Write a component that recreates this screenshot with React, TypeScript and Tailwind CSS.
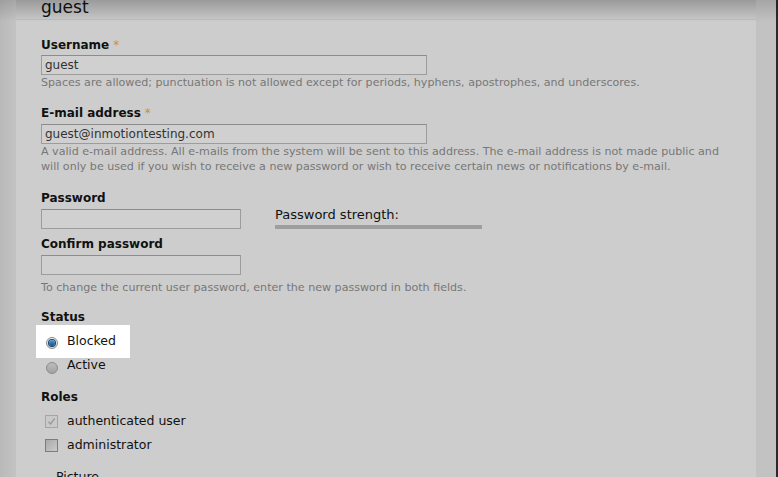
const font = { fontFamily: '"DejaVu Sans", Verdana, sans-serif' };

function Label({ text, required }: { text: string; required?: boolean }) {
  return (
    <div className="h-[15px] text-[12px] leading-[15px] font-bold text-[#111]">
      {text}
      {required && <span className="ml-[4px] font-normal text-[#d1922a]">*</span>}
    </div>
  );
}

function TextInput({ value, width }: { value?: string; width: string }) {
  return (
    <div
      className={`${width} h-[20px] border border-[#9c9c9c] border-t-[#8c8c8c] bg-[#d0d0d0] px-[3px] text-[12px] leading-[18px] text-[#333]`}
    >
      {value}
    </div>
  );
}

function Desc({ children }: { children: React.ReactNode }) {
  return <div className="text-[11.1px] leading-[15px] text-[#777]">{children}</div>;
}

function Radio({ checked }: { checked?: boolean }) {
  if (checked) {
    return (
      <span className="flex h-[12px] w-[12px] items-center justify-center rounded-full border border-[#8a8a8a] bg-gradient-to-b from-[#f4f4f4] to-[#d8d8d8]">
        <span className="block h-[6px] w-[6px] rounded-full bg-gradient-to-b from-[#4aa0e0] to-[#0f4f8f] ring-1 ring-[#1a3f66]" />
      </span>
    );
  }
  return (
    <span className="block h-[12px] w-[12px] rounded-full border border-[#8c8c8c] bg-gradient-to-b from-[#bcbcbc] to-[#a2a2a2]" />
  );
}

export default function App() {
  return (
    <div style={font} className="relative flex h-[477px] w-[778px] overflow-hidden bg-[#c2c2c2]">
      <div className="w-[16px] shrink-0 bg-gradient-to-r from-[#b9b9b9] to-[#c3c3c3]" />
      <div className="w-[740px] shrink-0 bg-[#cdcdcd]">
        <div className="flex h-[20px] items-start border-b border-[#bdbdbd] bg-gradient-to-b from-[#b6b6b6] to-[#c9c9c9] pl-[25px]">
          <h1 className="-mt-[1px] text-[17px] leading-[17px] font-normal text-[#111]">guest</h1>
        </div>

        <div className="flow-root pl-[25px]">
          <div className="mt-[18px]">
            <Label text="Username" required />
            <div className="mt-[2px]">
              <TextInput value="guest" width="w-[386px]" />
            </div>
            <Desc>
              Spaces are allowed; punctuation is not allowed except for periods, hyphens, apostrophes, and underscores.
            </Desc>
          </div>

          <div className="mt-[16px]">
            <Label text="E-mail address" required />
            <div className="mt-[3px]">
              <TextInput value="guest@inmotiontesting.com" width="w-[386px]" />
            </div>
            <div className="w-[690px]">
              <Desc>
                A valid e-mail address. All e-mails from the system will be sent to this address. The e-mail address is not made public and will only be used if you wish to receive a new password or wish to receive certain news or notifications by e-mail.
              </Desc>
            </div>
          </div>

          <div className="mt-[17px] flex">
            <div className="w-[234px]">
              <Label text="Password" />
              <div className="mt-[3px]">
                <TextInput width="w-[200px]" />
              </div>
            </div>
            <div className="pt-[16px]">
              <div className="text-[13px] leading-[15px] text-[#111]">Password strength:</div>
              <div className="mt-[3px] h-[4px] w-[207px] bg-[#9e9e9e]" />
            </div>
          </div>

          <div className="mt-[8px]">
            <Label text="Confirm password" />
            <div className="mt-[3px]">
              <TextInput width="w-[200px]" />
            </div>
            <div className="mt-[5px]">
              <Desc>To change the current user password, enter the new password in both fields.</Desc>
            </div>
          </div>

          <div className="mt-[15px]">
            <Label text="Status" />
            <div className="-ml-[5px] flex h-[33px] w-[94px] items-center gap-[9px] bg-white pl-[10px] text-[12.5px] text-[#111]">
              <span className="mt-[3px]">
                <Radio checked />
              </span>
              <span>Blocked</span>
            </div>
            <div className="-mt-[2px] flex h-[18px] items-center gap-[9px] pl-[5px] text-[12.5px] text-[#111]">
              <span className="mt-[6px]">
                <Radio />
              </span>
              <span>Active</span>
            </div>
          </div>

          <div className="mt-[16px]">
            <Label text="Roles" />
            <div className="mt-[7px] flex h-[18px] items-center gap-[9px] pl-[4px] text-[12.5px] text-[#111]">
              <span className="flex h-[13px] w-[13px] items-center justify-center border border-[#a5a5a5] bg-[#c9c9c9]">
                <svg width="9" height="9" viewBox="0 0 9 9">
                  <path d="M1.5 4.8 L3.6 7 L7.6 1.5" fill="none" stroke="#9a9a9a" strokeWidth="1.3" />
                </svg>
              </span>
              <span>authenticated user</span>
            </div>
            <div className="mt-[6px] flex h-[18px] items-center gap-[9px] pl-[4px] text-[12.5px] text-[#111]">
              <span className="block h-[13px] w-[13px] border border-[#7c7c7c] bg-gradient-to-br from-[#a9a9a9] to-[#cbcbcb]" />
              <span>administrator</span>
            </div>
          </div>

          <div className="mt-[15px] pl-[15px] text-[12.5px] leading-[15px] text-[#111]">Picture</div>
        </div>
      </div>
      <div className="w-[20px] shrink-0 bg-[#c2c2c2]" />
      <div className="w-[2px] shrink-0 bg-[#2a2a2a]" />
      <div className="pointer-events-none absolute inset-x-0 top-0 h-[22px] bg-gradient-to-b from-black/15 to-transparent" />
    </div>
  );
}
